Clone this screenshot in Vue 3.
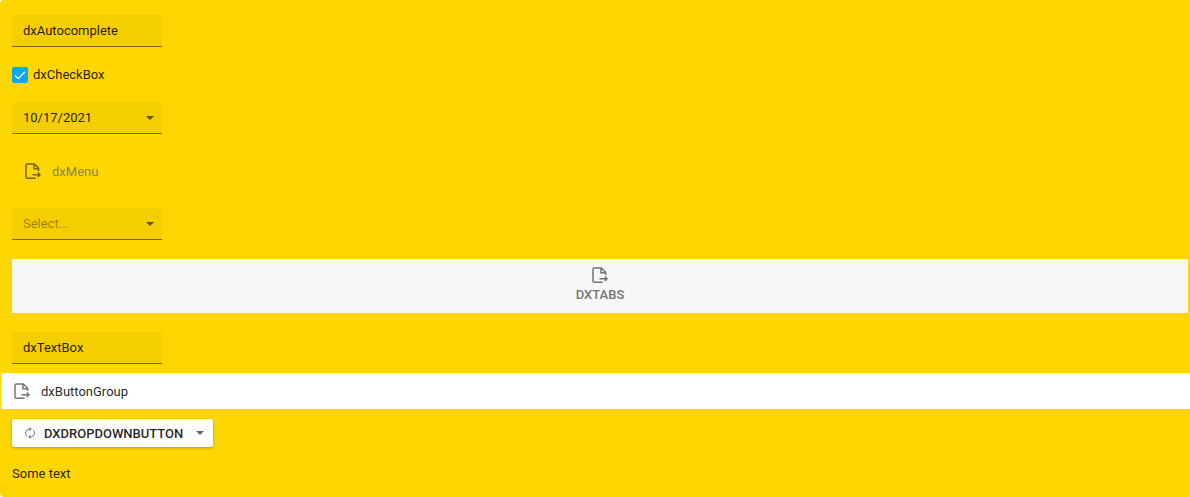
<script setup>
import { ref } from 'vue'

const autocomplete = ref('dxAutocomplete')
const checked = ref(true)
const date = ref('10/17/2021')
const selected = ref('')
const text = ref('dxTextBox')
const exportPath = 'M13.6 8V5.3L9.3 1H2.5Q1 1 1 2.5V14Q1 15.3 2.5 15.3H10.7M9 1V5.8H13.6M7.5 11.7H15M12.8 9.5L15 11.7L12.8 13.9'
</script>

<template>
  <main class="page">
    <input v-model="autocomplete" class="field" type="text" aria-label="Autocomplete" />

    <label class="check">
      <input v-model="checked" type="checkbox" />
      <span class="box">
        <svg v-if="checked" width="16" height="16" viewBox="0 0 16 16"><path d="M3 8.5L6.3 11.7L13 4.8" /></svg>
      </span>
      <span>dxCheckBox</span>
    </label>

    <div class="field combo date">
      <input v-model="date" type="text" aria-label="Date" />
      <button type="button" class="drop" aria-label="Open calendar">
        <svg class="arrow" width="8" height="4" viewBox="0 0 8 4"><path d="M0 0H8L4 4Z" /></svg>
      </button>
    </div>

    <nav class="menu">
      <button type="button" class="menu-item">
        <svg class="export" width="16" height="16" viewBox="0 0 16 16"><path :d="exportPath" /></svg>
        <span>dxMenu</span>
      </button>
    </nav>

    <div class="field combo choice">
      <select v-model="selected" aria-label="Select">
        <option value="" disabled>Select...</option>
      </select>
      <span class="drop">
        <svg class="arrow" width="8" height="4" viewBox="0 0 8 4"><path d="M0 0H8L4 4Z" /></svg>
      </span>
    </div>

    <div class="tabs" role="tablist">
      <button type="button" class="tab" role="tab">
        <svg class="export" width="16" height="16" viewBox="0 0 16 16"><path :d="exportPath" /></svg>
        <span>DXTABS</span>
      </button>
    </div>

    <input v-model="text" class="field" type="text" aria-label="Text" />

    <button type="button" class="group">
      <svg class="export" width="16" height="16" viewBox="0 0 16 16"><path :d="exportPath" /></svg>
      <span>dxButtonGroup</span>
    </button>

    <button type="button" class="dropdown">
      <svg class="refresh" width="12" height="12" viewBox="0 0 12 12">
        <path d="M3 9.2A4 4 0 0 1 3.1 2.9Q4.3 2 6.3 2.1M9 2.8A4 4 0 0 1 8.9 9.1Q7.7 10 5.7 9.9" />
        <path class="tip" d="M5.5 0L7.7 2.1L5.5 4.2ZM6.5 7.8L4.3 9.9L6.5 12Z" />
      </svg>
      <span class="caption">DXDROPDOWNBUTTON</span>
      <svg class="arrow" width="8" height="4" viewBox="0 0 8 4"><path d="M0 0H8L4 4Z" /></svg>
    </button>

    <p class="note">Some text</p>
  </main>
</template>

<style>
body {
  background: #fff;
}
</style>

<style scoped>
.page {
  display: flex;
  flex-direction: column;
  align-items: flex-start;
  box-sizing: border-box;
  padding: 15px 0 15px 12px;
  border-radius: 4px 0 0 4px;
  background: #ffd700;
  color: rgba(0, 0, 0, 0.87);
  font: 13px/17px Roboto, sans-serif;
}
button,
input,
select {
  margin: 0;
  border: 0;
  padding: 0;
  background: none;
  color: inherit;
  font: inherit;
  outline: 0;
}
svg {
  display: block;
  flex: none;
}
.field {
  box-sizing: border-box;
  width: 150px;
  height: 32px;
  padding: 0 11px;
  border-bottom: 1px solid rgba(0, 0, 0, 0.5);
  border-radius: 2px 2px 0 0;
  background: rgba(0, 0, 0, 0.04);
}
.check {
  display: flex;
  align-items: center;
  gap: 5px;
  height: 17px;
  margin: 19px 0;
}
.check input {
  position: absolute;
  opacity: 0;
}
.box {
  width: 16px;
  height: 16px;
  border-radius: 2px;
  background: #03a9f4;
}
.box path {
  fill: none;
  stroke: #fff;
  stroke-width: 1.3;
}
.combo {
  display: flex;
  padding-right: 0;
}
.combo input,
.combo select {
  flex: 1;
  min-width: 0;
  appearance: none;
}
.choice select {
  color: rgba(0, 0, 0, 0.38);
  opacity: 1;
}
.drop {
  display: flex;
  align-items: center;
  justify-content: center;
  width: 24px;
  pointer-events: none;
}
.arrow {
  fill: rgba(0, 0, 0, 0.6);
}
.export {
  fill: none;
  stroke: rgba(0, 0, 0, 0.54);
  stroke-width: 1.5;
}
.menu {
  margin: 20px 0;
}
.menu-item {
  display: flex;
  align-items: center;
  gap: 11px;
  height: 34px;
  padding: 0 13px;
}
.menu-item span {
  color: #8c8458;
}
.tabs {
  align-self: stretch;
  margin: 19px 2px 19px 0;
  background: #f7f7f7;
}
.tab {
  display: flex;
  flex-direction: column;
  align-items: center;
  gap: 3px;
  width: 100%;
  height: 54px;
  padding-top: 8px;
  color: #757575;
  font-weight: 500;
}
.group {
  display: flex;
  align-items: center;
  align-self: stretch;
  gap: 11px;
  height: 36px;
  margin: 9px 0 10px -11px;
  padding: 0 13px;
  border-radius: 2px 0 0 2px;
  background: #fff;
}
.dropdown {
  display: flex;
  align-items: center;
  height: 28px;
  padding: 0 9px 0 12px;
  border-radius: 2px;
  background: #fff;
  box-shadow: 0 1px 3px rgba(0, 0, 0, 0.3);
  font-weight: 500;
}
.caption {
  margin: 0 13px 0 8px;
}
.refresh {
  fill: none;
  stroke: #757575;
}
.refresh .tip {
  fill: #757575;
  stroke: none;
}
.note {
  margin: 18px 0 0;
}
</style>
